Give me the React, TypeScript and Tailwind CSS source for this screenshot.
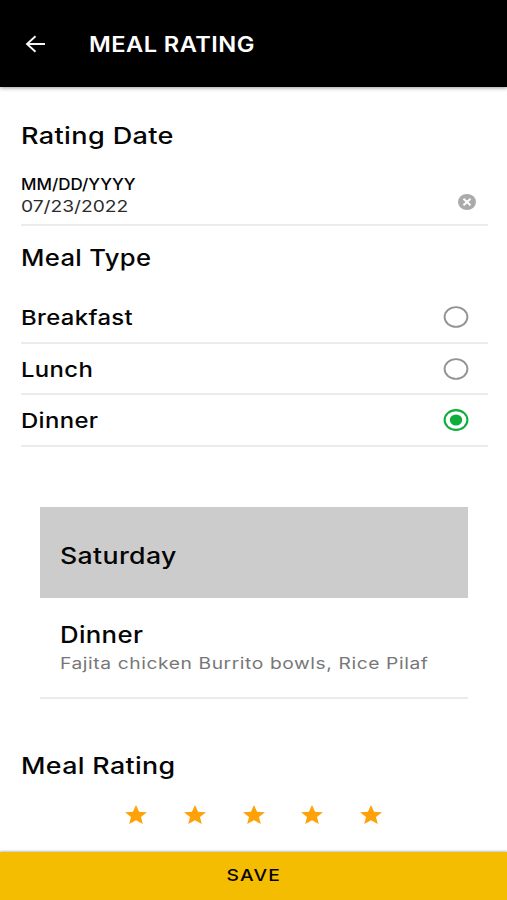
import { useState } from 'react'

const MEALS = ['Breakfast', 'Lunch', 'Dinner']

const heading = 'block w-fit origin-left whitespace-nowrap text-[23px] leading-[30px] font-[550] tracking-[0.3px]'

function Radio({ checked }: { checked: boolean }) {
  return (
    <svg width="26" height="22" viewBox="0 0 26 22" fill="none">
      <ellipse cx="13" cy="11" rx="11.4" ry="9.9" stroke={checked ? '#0fae3c' : '#949494'} strokeWidth={checked ? 2.1 : 1.9} />
      {checked && <ellipse cx="13" cy="11" rx="6.2" ry="5.6" fill="#0fae3c" />}
    </svg>
  )
}

function Star({ filled }: { filled: boolean }) {
  return (
    <svg width="22" height="19" viewBox="2 2 20 19" preserveAspectRatio="none" fill={filled ? '#ffa20a' : '#d4d4d4'}>
      <path d="M12 17.27 18.18 21l-1.64-7.03L22 9.24l-7.19-.61L12 2 9.19 8.63 2 9.24l5.46 4.73L5.82 21z" />
    </svg>
  )
}

export default function App() {
  const [meal, setMeal] = useState('Dinner')
  const [rating, setRating] = useState(5)

  return (
    <div className="flex h-[900px] w-full flex-col overflow-hidden bg-white font-['Inter',sans-serif] text-[#050505]">
      <header className="z-10 flex h-[87px] shrink-0 items-center bg-black pl-[25px] text-white shadow-[0_1px_4px_rgba(0,0,0,0.4)]">
        <button aria-label="Back">
          <svg width="21" height="18" viewBox="0 0 21 18" fill="none" stroke="#f5f5f5" strokeWidth="1.9">
            <path d="M20 9H2M10.5 1.2 2 9l8.5 7.8" />
          </svg>
        </button>
        <h1 className="mt-[2px] ml-[43px] origin-left scale-x-[1.125] whitespace-nowrap text-[21px] leading-[30px] font-semibold tracking-[0.4px]">
          MEAL RATING
        </h1>
      </header>

      <main className="flex-1 pt-[34px] pr-[19px] pl-[21px]">
        <h2 className={`${heading} scale-x-[1.178]`}>Rating Date</h2>

        {/* Date field */}
        <div className="mt-[23px] flex h-[52px] items-start justify-between border-b-2 border-[#ebebeb] pr-[12px]">
          <div>
            <div className="w-fit origin-left scale-x-[1.095] text-[15.5px] leading-[21px] font-medium">MM/DD/YYYY</div>
            <div className="w-fit origin-left scale-x-[1.2] text-[16px] leading-[22px] text-[#2b2b2b]">07/23/2022</div>
          </div>
          <button aria-label="Clear date" className="mt-[20px]">
            <svg width="18" height="16" viewBox="0 0 18 16">
              <ellipse cx="9" cy="8" rx="9" ry="8" fill="#aaaaaa" />
              <path d="m5.5 4.8 7 6.4m0-6.4-7 6.4" stroke="#fff" strokeWidth="2" />
            </svg>
          </button>
        </div>

        <h2 className={`${heading} mt-[17px] scale-x-[1.115]`}>Meal Type</h2>

        {/* Meal options */}
        <div className="mt-[19px]">
          {MEALS.map((name) => (
            <button
              key={name}
              onClick={() => setMeal(name)}
              className="flex h-[51.5px] w-full items-center justify-between border-b-2 border-[#ebebeb] pt-px pr-[19px]"
            >
              <span className="origin-left scale-x-[1.165] pt-[2px] text-[20.5px] leading-[28px] font-[550] tracking-[0.3px]">
                {name}
              </span>
              <Radio checked={meal === name} />
            </button>
          ))}
        </div>

        {/* Selected meal */}
        <section className="mr-[20px] ml-[19px] mt-[60px] h-[192.5px] border-b-2 border-[#ebebeb]">
          <div className="flex h-[91.5px] items-center bg-[#cccccc] pt-[7px] pl-[20px]">
            <h3 className={`${heading} scale-x-[1.16]`}>Saturday</h3>
          </div>
          <div className="pt-[21.5px] pl-[20px]">
            <h3 className={`${heading} scale-x-[1.12]`}>Dinner</h3>
            <p className="mt-px w-fit origin-left scale-x-[1.2] whitespace-nowrap text-[16px] leading-[24px] tracking-[0.5px] text-[#777777]">
              Fajita chicken Burrito bowls, Rice Pilaf
            </p>
          </div>
        </section>

        <h2 className={`${heading} mt-[51.5px] scale-x-[1.165]`}>Meal Rating</h2>
        <div className="mt-[24px] flex justify-center gap-[36.7px] pr-[2px]">
          {[1, 2, 3, 4, 5].map((n) => (
            <button key={n} aria-label={`${n} stars`} onClick={() => setRating(n)}>
              <Star filled={n <= rating} />
            </button>
          ))}
        </div>
      </main>

      <button className="flex h-[48.5px] shrink-0 items-center justify-center bg-[#f5bd02] pb-px shadow-[0_-1px_2px_rgba(0,0,0,0.25)]">
        <span className="scale-x-[1.2] text-[16px] leading-[24px] font-medium tracking-[1px]">SAVE</span>
      </button>
    </div>
  )
}
